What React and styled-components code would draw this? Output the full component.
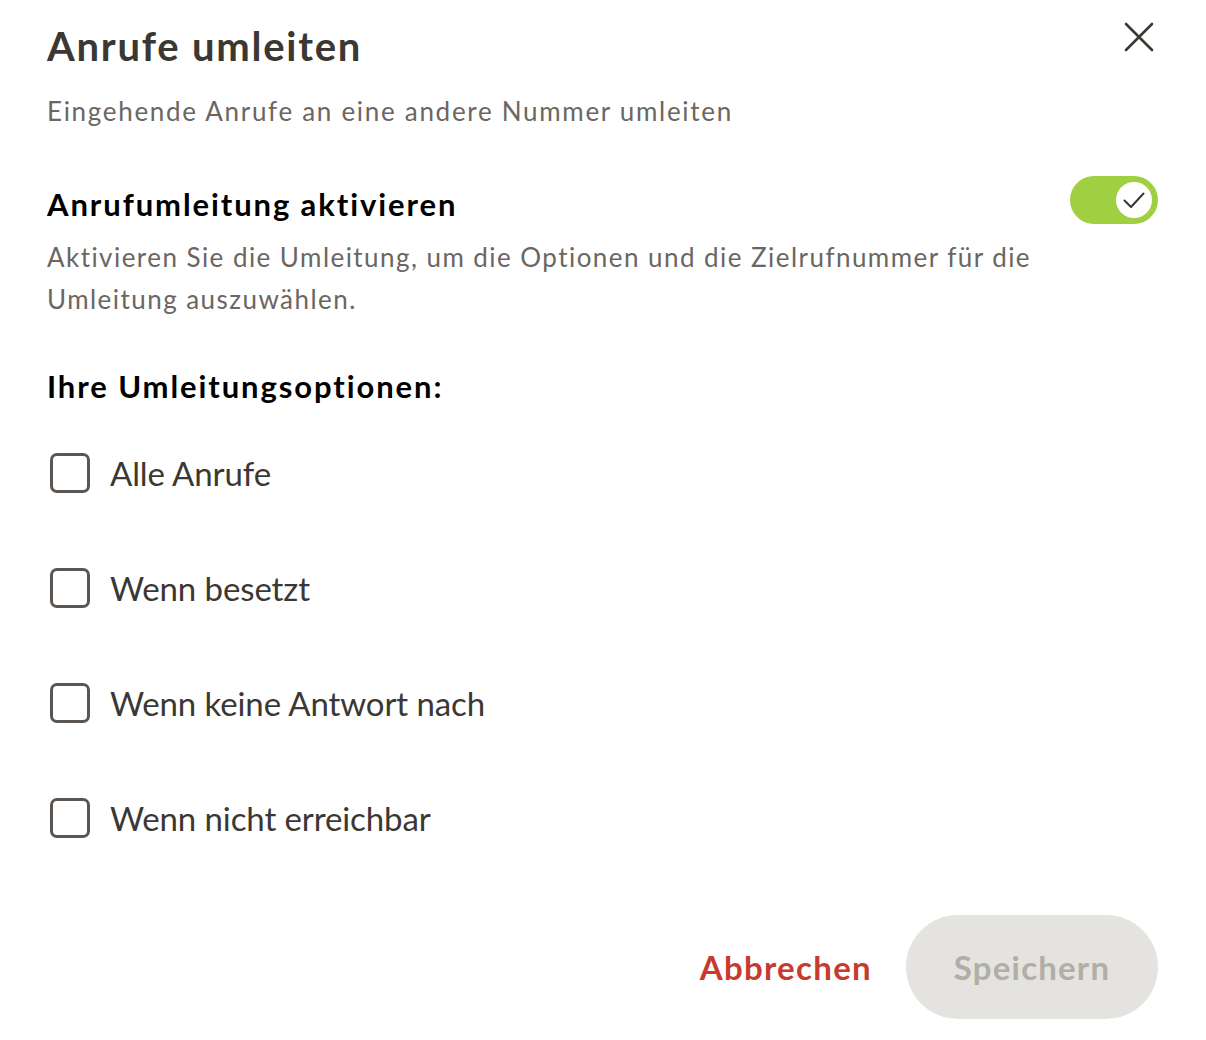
import React, { useState } from 'react'
import styled, { createGlobalStyle } from 'styled-components'

const GlobalStyle = createGlobalStyle`
  html, body {
    margin: 0;
    padding: 0;
    background: #ffffff;
  }
  body {
    font-family: Lato, "Liberation Sans", sans-serif;
    -webkit-font-smoothing: antialiased;
  }
`

const options = [
  'Alle Anrufe',
  'Wenn besetzt',
  'Wenn keine Antwort nach',
  'Wenn nicht erreichbar',
]

const App = () => {
  const [enabled, setEnabled] = useState(true)
  const [checked, setChecked] = useState([false, false, false, false])

  const toggleOption = index => {
    setChecked(checked.map((c, i) => (i === index ? !c : c)))
  }

  return (
    <>
      <GlobalStyle />
      <Dialog>
        <Header>
          <Title>Anrufe umleiten</Title>
          <CloseButton aria-label="Schließen">
            <svg width="30" height="30" viewBox="0 0 30 30">
              <path d="M2 2 L28 28 M28 2 L2 28" stroke="#3b3834" strokeWidth="2.6" strokeLinecap="round" />
            </svg>
          </CloseButton>
        </Header>
        <Subtitle>Eingehende Anrufe an eine andere Nummer umleiten</Subtitle>

        <ToggleRow>
          <SectionTitle>Anrufumleitung aktivieren</SectionTitle>
          <Switch $on={enabled} onClick={() => setEnabled(!enabled)}>
            <Knob $on={enabled}>
              <svg width="26" height="26" viewBox="0 0 26 26">
                <path d="M3.5 13.5 L10 20 L22.5 6.5" fill="none" stroke="#3b3834" strokeWidth="2" strokeLinecap="round" strokeLinejoin="round" />
              </svg>
            </Knob>
          </Switch>
        </ToggleRow>
        <Description>
          Aktivieren Sie die Umleitung, um die Optionen und die Zielrufnummer für die Umleitung auszuwählen.
        </Description>

        <OptionsTitle>Ihre Umleitungsoptionen:</OptionsTitle>
        <OptionList>
          {options.map((label, index) => (
            <Option key={index} onClick={() => toggleOption(index)}>
              <Box $checked={checked[index]} />
              <OptionLabel>{label}</OptionLabel>
            </Option>
          ))}
        </OptionList>

        <Footer>
          <CancelButton>Abbrechen</CancelButton>
          <SaveButton disabled>Speichern</SaveButton>
        </Footer>
      </Dialog>
    </>
  )
}

export default App

const Dialog = styled.div`
  width: 1206px;
  height: 1040px;
  box-sizing: border-box;
  padding: 16px 48px 0 47px;
  display: flex;
  flex-direction: column;
  color: #3b3834;
`

const Header = styled.div`
  display: flex;
  justify-content: space-between;
  align-items: flex-start;
`

const Title = styled.h1`
  margin: 0;
  font-size: 40px;
  line-height: 60px;
  font-weight: 700;
  letter-spacing: 1.75px;
  color: #3b3834;
`

const CloseButton = styled.button`
  border: none;
  background: none;
  padding: 0;
  margin: 6px 4px 0 0;
  cursor: pointer;
  display: flex;
`

const Subtitle = styled.p`
  margin: 18px 0 0;
  font-size: 26px;
  line-height: 34px;
  letter-spacing: 1.7px;
  color: #6b6661;
`

const ToggleRow = styled.div`
  margin-top: 47px;
  display: flex;
  justify-content: space-between;
  align-items: center;
`

const SectionTitle = styled.h2`
  margin: 9px 0 0;
  font-size: 31px;
  line-height: 40px;
  font-weight: 700;
  letter-spacing: 1.9px;
  color: #000000;
`

const Switch = styled.button`
  width: 88px;
  height: 48px;
  border-radius: 24px;
  border: none;
  padding: 6px;
  background: ${p => (p.$on ? '#a1cf42' : '#c9c6c1')};
  display: flex;
  justify-content: ${p => (p.$on ? 'flex-end' : 'flex-start')};
  align-items: center;
  cursor: pointer;
`

const Knob = styled.span`
  width: 36px;
  height: 36px;
  border-radius: 50%;
  background: #ffffff;
  display: flex;
  align-items: center;
  justify-content: center;
  svg {
    visibility: ${p => (p.$on ? 'visible' : 'hidden')};
  }
`

const Description = styled.p`
  margin: 12px 0 0;
  max-width: 1070px;
  font-size: 26px;
  line-height: 42px;
  letter-spacing: 1.45px;
  color: #6b6661;
`

const OptionsTitle = styled.h3`
  margin: 46px 0 0;
  font-size: 31px;
  line-height: 40px;
  font-weight: 700;
  letter-spacing: 1.9px;
  color: #000000;
`

const OptionList = styled.div`
  margin-top: 47px;
  display: flex;
  flex-direction: column;
  gap: 75px;
`

const Option = styled.label`
  display: flex;
  align-items: center;
  gap: 20px;
  height: 40px;
  padding-left: 3px;
  cursor: pointer;
`

const Box = styled.span`
  width: 40px;
  height: 40px;
  box-sizing: border-box;
  border: 3px solid #5b5651;
  border-radius: 7px;
  background: ${p => (p.$checked ? '#5b5651' : '#ffffff')};
`

const OptionLabel = styled.span`
  font-size: 33px;
  letter-spacing: -0.1px;
  color: #3b3834;
`

const Footer = styled.div`
  margin-top: 77px;
  display: flex;
  justify-content: flex-end;
  align-items: center;
  gap: 34px;
`

const CancelButton = styled.button`
  border: none;
  background: none;
  padding: 0;
  font-family: inherit;
  font-size: 33px;
  font-weight: 700;
  letter-spacing: 1.3px;
  color: #c63b2b;
  cursor: pointer;
`

const SaveButton = styled.button`
  width: 252px;
  height: 104px;
  border: none;
  border-radius: 52px;
  background: #e4e3df;
  font-family: inherit;
  font-size: 33px;
  font-weight: 700;
  letter-spacing: 1.2px;
  color: #b1ada7;
`
